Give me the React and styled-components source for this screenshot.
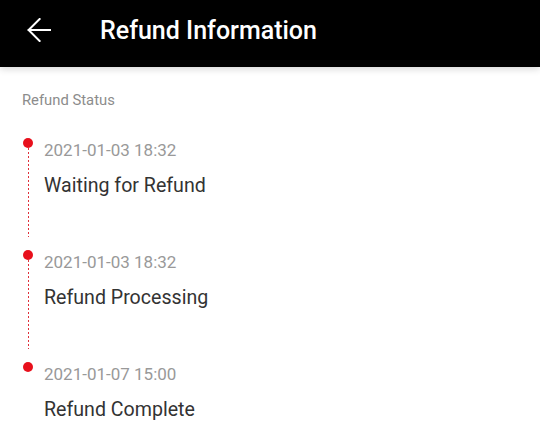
import React from "react";
import styled, { createGlobalStyle } from "styled-components";

const Global = createGlobalStyle`
  html, body { margin: 0; padding: 0; background: #fff; }
  body { font-family: Roboto, "Noto Sans", Arial, sans-serif; }
`;

const Page = styled.div`
  width: 540px;
  background: #fff;
`;

const Header = styled.header`
  height: 67px;
  box-sizing: border-box;
  padding: 0 0 6px 27px;
  background: #000;
  display: flex;
  align-items: center;
  box-shadow: 0 2px 7px rgba(0, 0, 0, 0.16);
  position: relative;
  z-index: 1;
`;

const BackButton = styled.button`
  width: 24px;
  height: 24px;
  padding: 0;
  border: 0;
  background: none;
  display: flex;
  align-items: center;
  justify-content: center;
  margin-right: 49px;
  margin-top: -2px;
`;

const Title = styled.h1`
  margin: 0;
  color: #fff;
  font-size: 25px;
  line-height: 28px;
  font-weight: 500;
`;

const Section = styled.section`
  padding: 25px 22px 0;
`;

const Label = styled.div`
  font-size: 14.8px;
  line-height: 16px;
  color: #8c8c8c;
  margin-bottom: 30px;
`;

const Item = styled.div`
  display: flex;
  height: ${(p) => (p.$last ? "auto" : "112px")};
`;

const Rail = styled.div`
  width: 12px;
  display: flex;
  flex-direction: column;
  align-items: center;
  margin-right: 10px;
`;

const Dot = styled.div`
  width: 10px;
  height: 10px;
  border-radius: 50%;
  background: #e8101c;
  flex: none;
`;

const Line = styled.div`
  width: 1px;
  flex: 1;
  margin-bottom: 13px;
  background: repeating-linear-gradient(
    to bottom,
    #e0303a 0 2px,
    transparent 2px 4px
  );
`;

const Content = styled.div`
  padding-top: 2px;
`;

const Time = styled.div`
  font-size: 17px;
  line-height: 20px;
  color: #999;
`;

const Status = styled.div`
  margin-top: 14px;
  font-size: 19.6px;
  line-height: 24px;
  color: #333;
`;

const items = [
  { time: "2021-01-03 18:32", status: "Waiting for Refund" },
  { time: "2021-01-03 18:32", status: "Refund Processing" },
  { time: "2021-01-07 15:00", status: "Refund Complete" },
];

export default function App() {
  return (
    <Page>
      <Global />
      <Header>
        <BackButton aria-label="Back">
          <svg width="24" height="24" viewBox="0 0 24 24" fill="none">
            <path
              d="M23 12H1.6M12.6 1 1.6 12l11 11"
              stroke="#fff"
              strokeWidth="2"
              strokeLinecap="square"
            />
          </svg>
        </BackButton>
        <Title>Refund Information</Title>
      </Header>
      <Section>
        <Label>Refund Status</Label>
        {items.map((it, i) => {
          const last = i === items.length - 1;
          return (
            <Item key={i} $last={last}>
              <Rail>
                <Dot />
                {!last && <Line />}
              </Rail>
              <Content>
                <Time>{it.time}</Time>
                <Status>{it.status}</Status>
              </Content>
            </Item>
          );
        })}
      </Section>
    </Page>
  );
}
